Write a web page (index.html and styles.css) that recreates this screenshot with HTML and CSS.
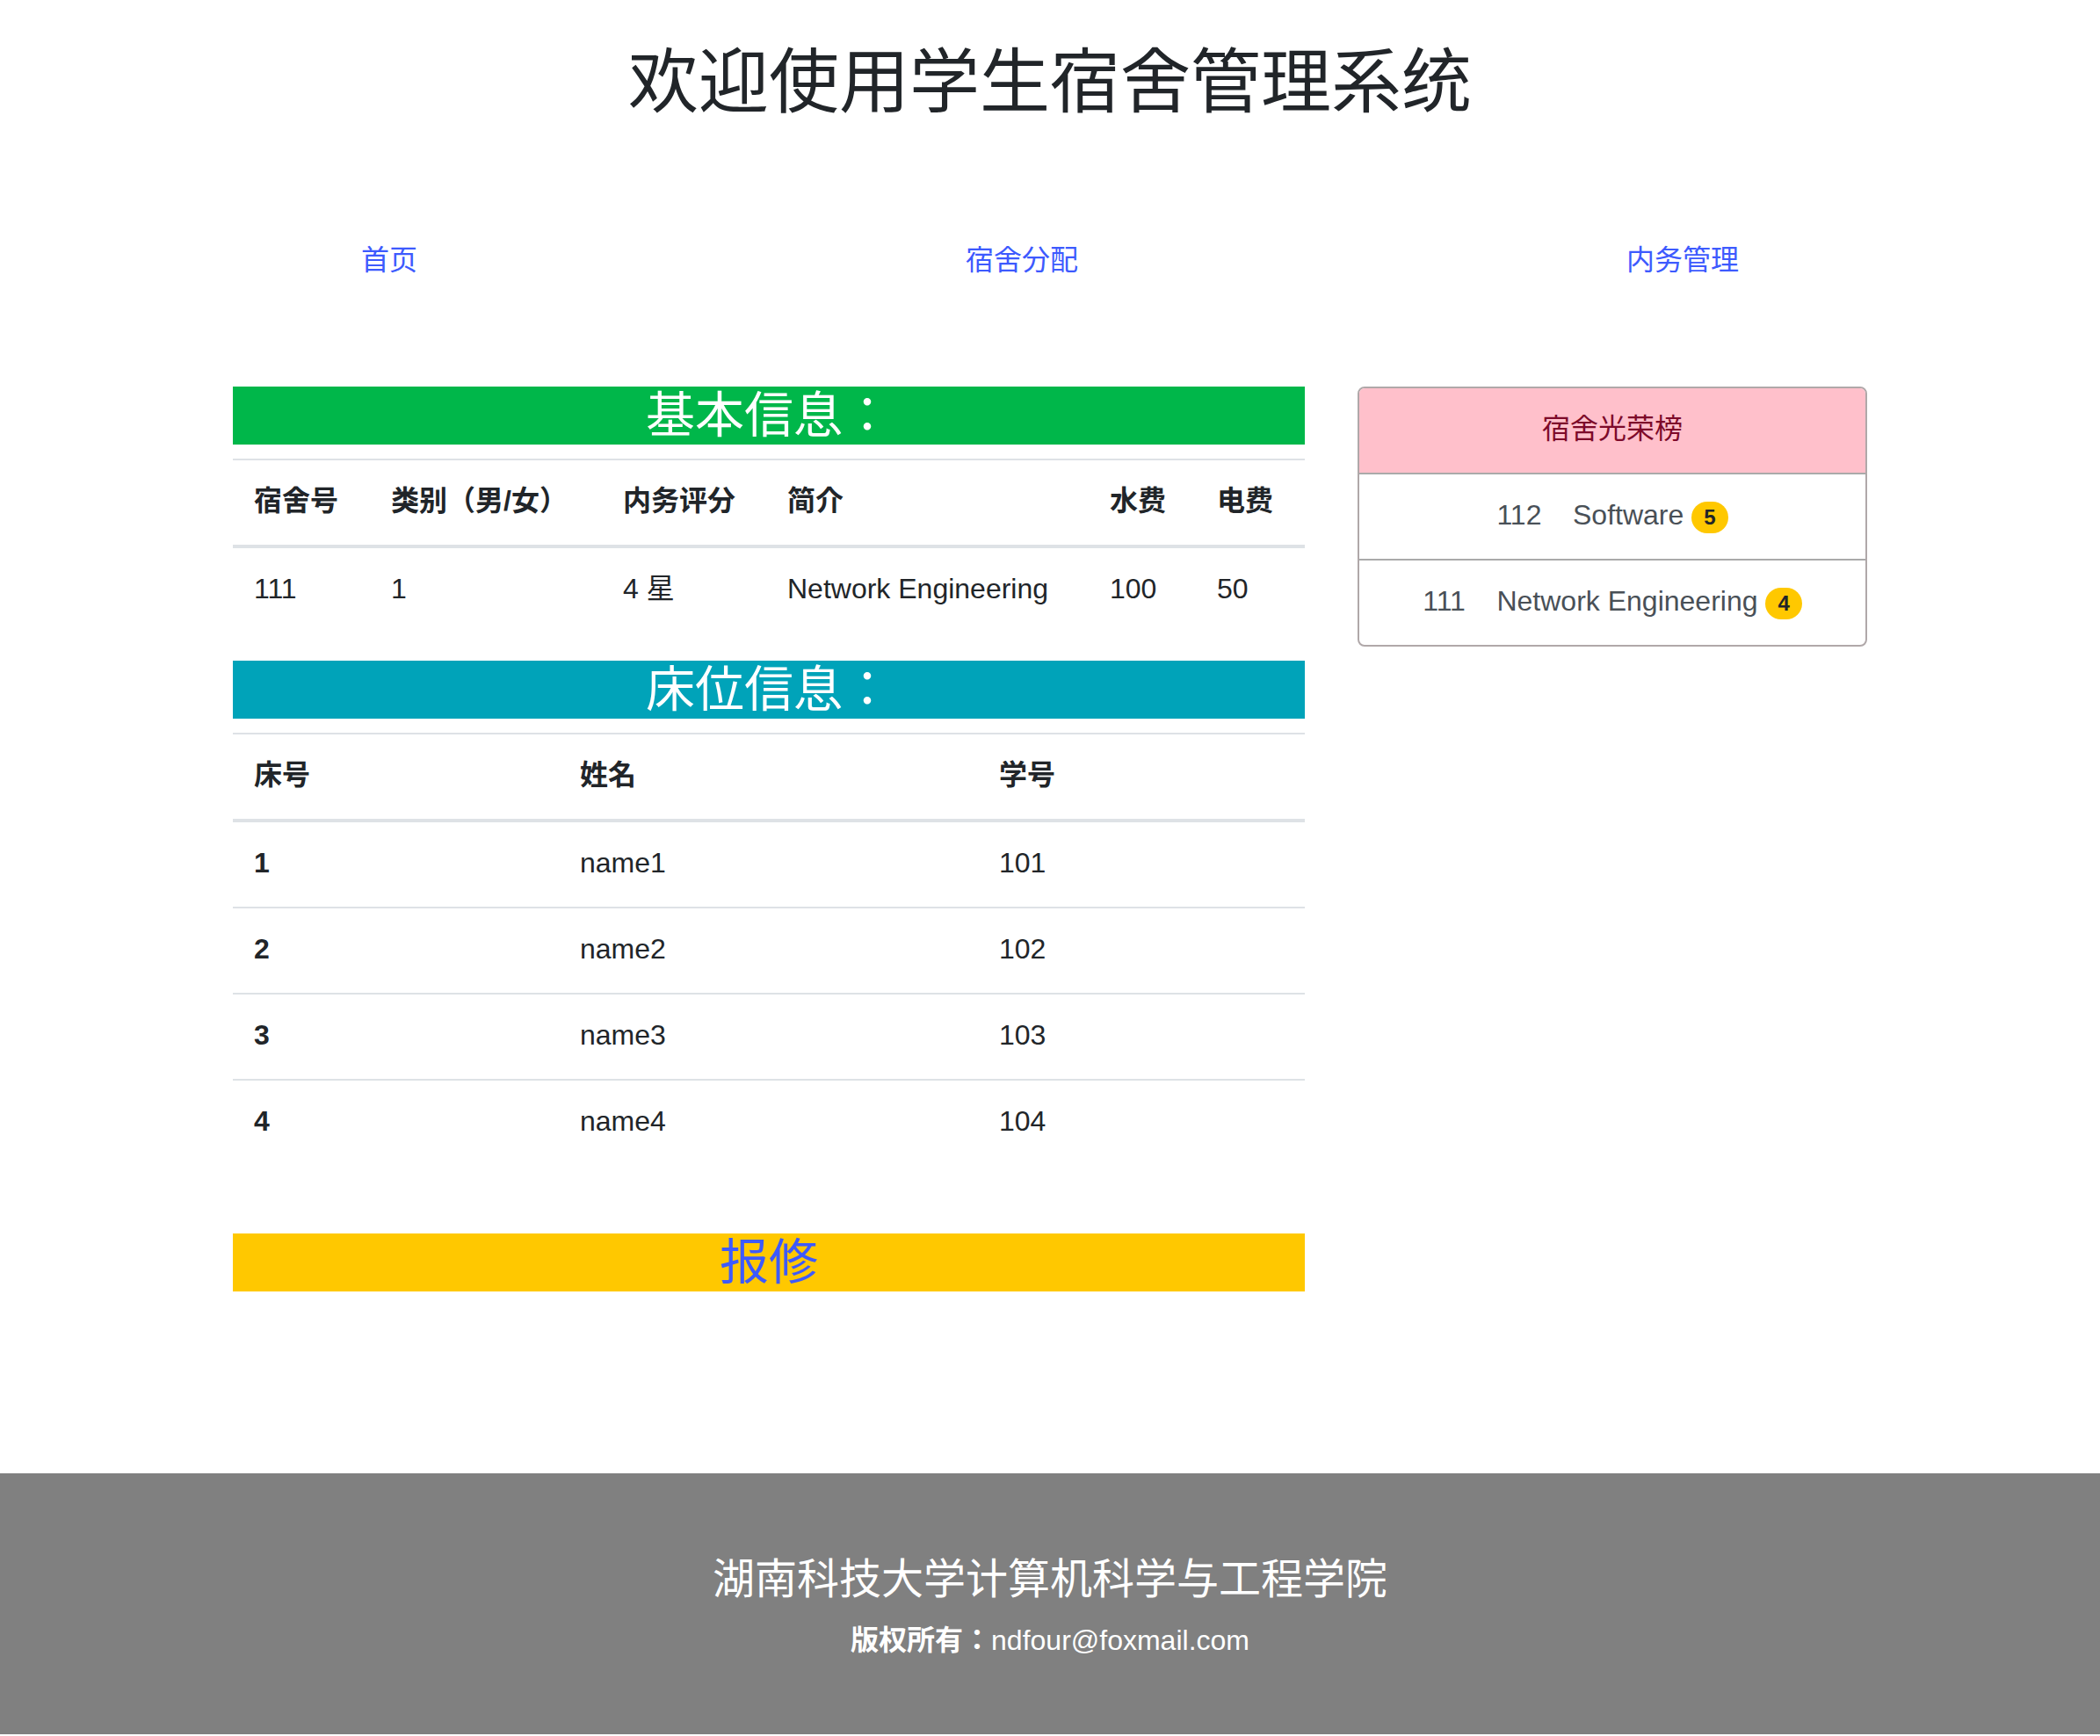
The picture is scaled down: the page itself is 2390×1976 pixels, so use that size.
FILE: index.html
```html
<!DOCTYPE html>
<html>
<head>
<meta charset="utf-8">
<title>学生宿舍管理系统</title>
<link rel="stylesheet" href="styles.css">
</head>
<body>
<header class="site-header">
  <h1 class="site-title">欢迎使用学生宿舍管理系统</h1>
</header>
<nav class="main-nav">
  <a class="nav-link" href="#">首页</a>
  <a class="nav-link" href="#">宿舍分配</a>
  <a class="nav-link" href="#">内务管理</a>
</nav>
<main class="content">
  <section class="main-col">
    <h3 class="bar bar-green">基本信息：</h3>
    <table class="data-table">
      <thead>
        <tr>
          <th class="w156">宿舍号</th>
          <th class="w264">类别（男/女）</th>
          <th class="w187">内务评分</th>
          <th class="w367">简介</th>
          <th class="w122">水费</th>
          <th class="w124">电费</th>
        </tr>
      </thead>
      <tbody>
        <tr>
          <td>111</td>
          <td>1</td>
          <td>4 星</td>
          <td>Network Engineering</td>
          <td>100</td>
          <td>50</td>
        </tr>
      </tbody>
    </table>
    <h3 class="bar bar-teal">床位信息：</h3>
    <table class="data-table">
      <thead>
        <tr>
          <th class="w371">床号</th>
          <th class="w477">姓名</th>
          <th class="w372">学号</th>
        </tr>
      </thead>
      <tbody>
        <tr><th>1</th><td>name1</td><td>101</td></tr>
        <tr><th>2</th><td>name2</td><td>102</td></tr>
        <tr><th>3</th><td>name3</td><td>103</td></tr>
        <tr><th>4</th><td>name4</td><td>104</td></tr>
      </tbody>
    </table>
    <h3 class="bar bar-yellow repair"><a href="#" class="repair-link">报修</a></h3>
  </section>
  <aside class="side-col">
    <div class="card">
      <div class="card-header">宿舍光荣榜</div>
      <ul class="list">
        <li class="list-item">112&nbsp;&nbsp;&nbsp;&nbsp;Software <span class="badge">5</span></li>
        <li class="list-item">111&nbsp;&nbsp;&nbsp;&nbsp;Network Engineering <span class="badge">4</span></li>
      </ul>
    </div>
  </aside>
</main>
<footer class="site-footer">
  <h4 class="footer-title">湖南科技大学计算机科学与工程学院</h4>
  <p class="footer-copy"><strong>版权所有：</strong>ndfour@foxmail.com</p>
</footer>
</body>
</html>
```
FILE: styles.css
```css
* { box-sizing: border-box; }

html, body {
  margin: 0;
  padding: 0;
}

body {
  font-family: "Liberation Sans", "Noto Sans CJK JP", sans-serif;
  font-size: 32px;
  line-height: 1.5;
  color: #212529;
  background: #fff;
}

.site-header {
  padding-top: 46px;
}

.site-title {
  margin: 0;
  font-size: 80px;
  font-weight: 400;
  line-height: 96px;
  text-align: center;
  color: #212529;
}

.main-nav {
  display: flex;
  justify-content: space-around;
  padding: 0 99px;
  margin-top: 114px;
}

.nav-link {
  display: block;
  padding: 16px 32px;
  line-height: 48px;
  color: #3d5afe;
  text-decoration: none;
}

.content {
  display: grid;
  grid-template-columns: 1220px 580px;
  column-gap: 60px;
  width: 1860px;
  margin: 104px auto 0;
  align-items: start;
}

.bar {
  margin: 0 0 16px;
  height: 66px;
  font-size: 56px;
  font-weight: 400;
  line-height: 66px;
  text-align: center;
  color: #fff;
}

.bar-green { background: #00b74a; }
.bar-teal { background: #00a3b9; }
.bar-yellow { background: #ffc800; }

.repair { margin-top: 78px; }

.repair-link {
  color: #3d5afe;
  text-decoration: none;
}

.data-table {
  width: 100%;
  border-collapse: collapse;
  table-layout: fixed;
  margin-bottom: 32px;
}

.data-table th,
.data-table td {
  padding: 22px 24px 26px;
  line-height: 48px;
  text-align: left;
  vertical-align: top;
  border-top: 2px solid #dee2e6;
}

.data-table th { font-weight: 700; }

.data-table thead th {
  border-bottom: 4px solid #dee2e6;
}

.w156 { width: 156px; }
.w264 { width: 264px; }
.w187 { width: 187px; }
.w367 { width: 367px; }
.w122 { width: 122px; }
.w124 { width: 124px; }
.w371 { width: 371px; }
.w477 { width: 477px; }
.w372 { width: 372px; }

.card {
  border: 2px solid #b0a8a9;
  border-radius: 8px;
  overflow: hidden;
}

.card-header {
  padding: 22px 40px 26px;
  line-height: 48px;
  background: #ffc0cb;
  color: #7d0a2a;
  text-align: center;
  border-bottom: 2px solid #aaaaaa;
}

.list {
  list-style: none;
  margin: 0;
  padding: 0;
}

.list-item {
  padding: 22px 40px 26px;
  line-height: 48px;
  text-align: center;
  color: #495057;
}

.list-item + .list-item {
  border-top: 2px solid #aaaaaa;
}

.badge {
  display: inline-block;
  padding: 6px 14px;
  font-size: 24px;
  font-weight: 700;
  line-height: 1;
  border-radius: 320px;
  background: #ffc800;
  color: #212529;
  vertical-align: baseline;
}

.site-footer {
  margin-top: 191px;
  height: 297px;
  padding-top: 92px;
  background: #808080;
  color: #fff;
  text-align: center;
}

.footer-title {
  margin: 0 0 16px;
  font-size: 48px;
  font-weight: 400;
  line-height: 57.6px;
}

.footer-copy {
  margin: 0;
  line-height: 48px;
}
```
